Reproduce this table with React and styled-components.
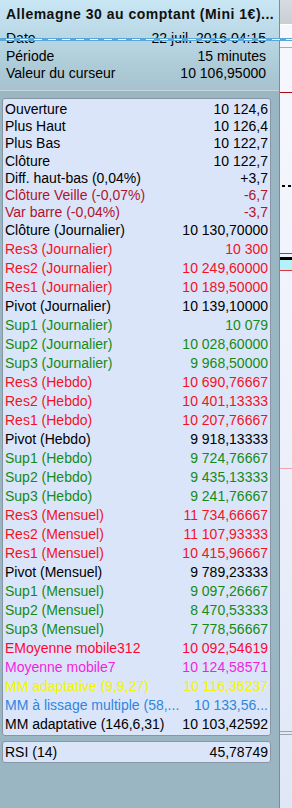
import React from 'react';
import styled, { createGlobalStyle } from 'styled-components';

const GlobalStyle = createGlobalStyle`
    html, body {
        margin: 0;
        padding: 0;
        background: #9ab6c2;
    }
    * {
        box-sizing: border-box;
    }
`

const Screen = styled.div`
    position: relative;
    width: 292px;
    height: 808px;
    display: flex;
    overflow: hidden;
    font-family: "Liberation Sans", Arial, sans-serif;
    font-size: 14px;
    color: #000;
`

const Panel = styled.div`
    width: 280px;
    height: 100%;
    display: flex;
    flex-direction: column;
    background: #9ab6c2;
    border-right: 1px solid #7b8e97;
`

const Header = styled.div`
    height: 91px;
    padding: 4px 13px 0 6px;
    background: linear-gradient(to bottom, #c8e6f4 0%, #b4d2df 55%, #a5c2ce 100%);
    border-bottom: 1px solid #c6d6dc;
`

const Title = styled.div`
    font-weight: 700;
    font-size: 14px;
    letter-spacing: 0.5px;
    line-height: 20px;
    white-space: nowrap;
    color: #101010;
    margin-bottom: 6px;
`

const InfoRow = styled.div`
    display: flex;
    justify-content: space-between;
    height: 17.5px;
    line-height: 17.5px;
    white-space: nowrap;
`

const DataBox = styled.div`
    margin: ${p => p.$top}px 0 0 2px;
    width: 269px;
    padding: ${p => p.$pad};
    background: #dae5fa;
    border: 1px solid #8796a3;
    border-radius: 3px;
`

const Row = styled.div`
    display: flex;
    justify-content: space-between;
    height: ${p => p.$h}px;
    line-height: ${p => p.$h}px;
    color: ${p => p.$color || '#000'};
    white-space: nowrap;
`

const Chart = styled.div`
    position: relative;
    flex: 1;
    height: 100%;
    background: linear-gradient(to bottom, #f7f8fe 0%, #eef1fb 50%, #dfe7f7 100%);
`

const ChartTop = styled.div`
    height: 25px;
    background: linear-gradient(to bottom, #d7dce1, #c7ced4);
    border-bottom: 1px solid #ffffff;
`

const HLine = styled.div`
    position: absolute;
    left: 0;
    right: 0;
    top: ${p => p.$y}px;
    height: ${p => p.$h || 1}px;
    background: ${p => p.$color};
`

const DottedLine = styled.div`
    position: absolute;
    left: 2px;
    right: 0;
    top: ${p => p.$y}px;
    height: 2px;
    background: repeating-linear-gradient(to right, #000 0 3px, transparent 3px 6px);
`

const Crosshair = styled.div`
    position: absolute;
    left: 0;
    right: 0;
    top: 38px;
    height: 3px;
    background: #5aa6d6;

    &::after {
        content: '';
        position: absolute;
        left: 0;
        right: 0;
        top: 1px;
        height: 1px;
        background: repeating-linear-gradient(to right, transparent 0 6px, #ffffff 6px 14px);
    }
`

const C = {
    dark: '#b0142c',
    red: '#f3121f',
    green: '#168a16',
    ema: '#ff0636',
    sma: '#f41fdc',
    yellow: '#f4f400',
    blue: '#2f86de',
};

const prices = [
    ['Ouverture', '10 124,6'],
    ['Plus Haut', '10 126,4'],
    ['Plus Bas', '10 122,7'],
    ['Clôture', '10 122,7'],
    ['Diff. haut-bas (0,04%)', '+3,7'],
    ['Clôture Veille (-0,07%)', '-6,7', C.dark],
    ['Var barre (-0,04%)', '-3,7', C.dark],
];

const indicators = [
    ['Clôture (Journalier)', '10 130,70000'],
    ['Res3 (Journalier)', '10 300', C.red],
    ['Res2 (Journalier)', '10 249,60000', C.red],
    ['Res1 (Journalier)', '10 189,50000', C.red],
    ['Pivot (Journalier)', '10 139,10000'],
    ['Sup1 (Journalier)', '10 079', C.green],
    ['Sup2 (Journalier)', '10 028,60000', C.green],
    ['Sup3 (Journalier)', '9 968,50000', C.green],
    ['Res3 (Hebdo)', '10 690,76667', C.red],
    ['Res2 (Hebdo)', '10 401,13333', C.red],
    ['Res1 (Hebdo)', '10 207,76667', C.red],
    ['Pivot (Hebdo)', '9 918,13333'],
    ['Sup1 (Hebdo)', '9 724,76667', C.green],
    ['Sup2 (Hebdo)', '9 435,13333', C.green],
    ['Sup3 (Hebdo)', '9 241,76667', C.green],
    ['Res3 (Mensuel)', '11 734,66667', C.red],
    ['Res2 (Mensuel)', '11 107,93333', C.red],
    ['Res1 (Mensuel)', '10 415,96667', C.red],
    ['Pivot (Mensuel)', '9 789,23333'],
    ['Sup1 (Mensuel)', '9 097,26667', C.green],
    ['Sup2 (Mensuel)', '8 470,53333', C.green],
    ['Sup3 (Mensuel)', '7 778,56667', C.green],
    ['EMoyenne mobile312', '10 092,54619', C.ema],
    ['Moyenne mobile7', '10 124,58571', C.sma],
    ['MM adaptative (9,9,27)', '10 116,36237', C.yellow],
    ['MM à lissage multiple (58,...', '10 133,56...', C.blue],
    ['MM adaptative (146,6,31)', '10 103,42592'],
];

export default function App() {
    return (
        <Screen>
            <GlobalStyle />
            <Panel>
                <Header>
                    <Title>Allemagne 30 au comptant (Mini 1€)...</Title>
                    <InfoRow><span>Date</span><span>22 juil. 2016 04:15</span></InfoRow>
                    <InfoRow><span>Période</span><span>15 minutes</span></InfoRow>
                    <InfoRow><span>Valeur du curseur</span><span>10 106,95000</span></InfoRow>
                </Header>

                <DataBox $top={7} $pad="2px 2px 1px 2px">
                    {prices.map(([label, value, color]) => (
                        <Row key={label} $h={17.2} $color={color}>
                            <span>{label}</span>
                            <span>{value}</span>
                        </Row>
                    ))}
                    {indicators.map(([label, value, color]) => (
                        <Row key={label} $h={19} $color={color}>
                            <span>{label}</span>
                            <span>{value}</span>
                        </Row>
                    ))}
                </DataBox>

                <DataBox $top={5} $pad="0 2px">
                    <Row $h={20}>
                        <span>RSI (14)</span>
                        <span>45,78749</span>
                    </Row>
                </DataBox>
            </Panel>

            <Chart>
                <ChartTop />
                <HLine $y={47} $color="#a3abb3" />
                <HLine $y={92} $color="#a30d0d" />
                <DottedLine $y={185} />
                <HLine $y={253} $color="#3a55e6" />
                <HLine $y={257} $h={3} $color="#000" />
                <HLine $y={260} $h={10} $color="#b4f1f8" />
                <HLine $y={270} $color="#e0303a" />
                <HLine $y={468} $color="#f2a2aa" />
                <HLine $y={731} $color="#9aa3ab" />
                <HLine $y={734} $color="#9aa3ab" />
            </Chart>

            <Crosshair />
        </Screen>
    );
}
